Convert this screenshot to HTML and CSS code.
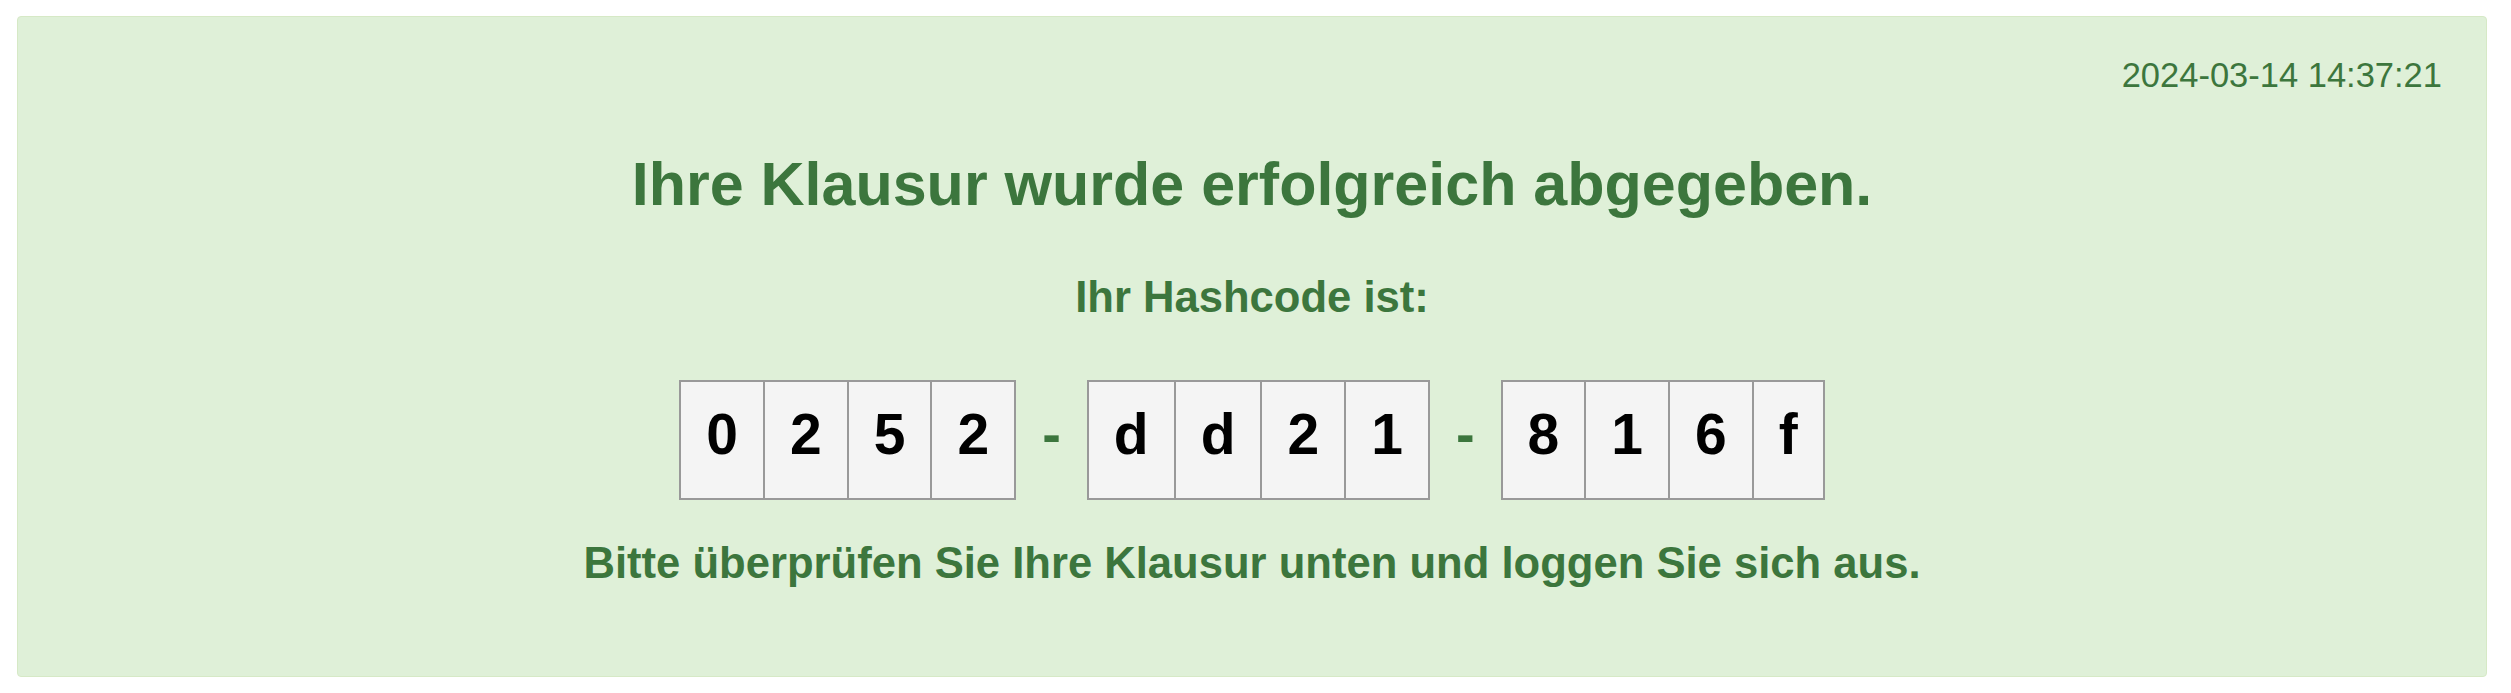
FILE: index.html
```html
<!DOCTYPE html>
<html lang="de">
<head>
<meta charset="utf-8">
<title>Klausur abgegeben</title>
<link rel="stylesheet" href="styles.css">
</head>
<body>
<div class="page">
  <div class="alert">
    <div class="timestamp">2024-03-14 14:37:21</div>
    <h2 class="title">Ihre Klausur wurde erfolgreich abgegeben.</h2>
    <h4 class="label">Ihr Hashcode ist:</h4>
    <div class="hash">
      <div class="group">
        <span class="cell">0</span><span class="cell">2</span><span class="cell">5</span><span class="cell">2</span>
      </div>
      <span class="dash">-</span>
      <div class="group">
        <span class="cell">d</span><span class="cell">d</span><span class="cell">2</span><span class="cell">1</span>
      </div>
      <span class="dash">-</span>
      <div class="group">
        <span class="cell">8</span><span class="cell">1</span><span class="cell">6</span><span class="cell">f</span>
      </div>
    </div>
    <h4 class="note">Bitte überprüfen Sie Ihre Klausur unten und loggen Sie sich aus.</h4>
  </div>
</div>
</body>
</html>
```

FILE: styles.css
```css
html, body {
  margin: 0;
  padding: 0;
  background: #ffffff;
}

body {
  font-family: "Liberation Sans", Arial, sans-serif;
  line-height: 1.2;
}

.page {
  padding: 16px 24px 0 17px;
}

.alert {
  background: #dff0d8;
  border: 1px solid #d6e9c6;
  border-radius: 4px;
  color: #3c763d;
  padding: 38px 44px 87px 44px;
  display: flex;
  flex-direction: column;
  align-items: center;
}

.timestamp {
  align-self: flex-end;
  font-size: 34.5px;
  line-height: 41.4px;
}

.title {
  margin: 52px 0 0 0;
  font-size: 61px;
  line-height: 73px;
  font-weight: bold;
}

.label {
  margin: 50px 0 0 0;
  font-size: 43.6px;
  line-height: 52px;
  font-weight: bold;
}

.hash {
  margin-top: 57px;
  display: flex;
  align-items: flex-start;
}

.group {
  display: flex;
}

.cell {
  background: #f4f4f4;
  border: 2px solid #999999;
  color: #000000;
  font-size: 57px;
  font-weight: bold;
  line-height: 64px;
  padding: 20px 25px 32px 25px;
}

.cell + .cell {
  margin-left: -2px;
}

.dash {
  color: #3c763d;
  font-size: 56px;
  font-weight: bold;
  line-height: 64px;
  padding-top: 22px;
  margin: 0 26px;
}

.note {
  margin: 37px 0 0 0;
  font-size: 43.6px;
  line-height: 52px;
  font-weight: bold;
}
```
